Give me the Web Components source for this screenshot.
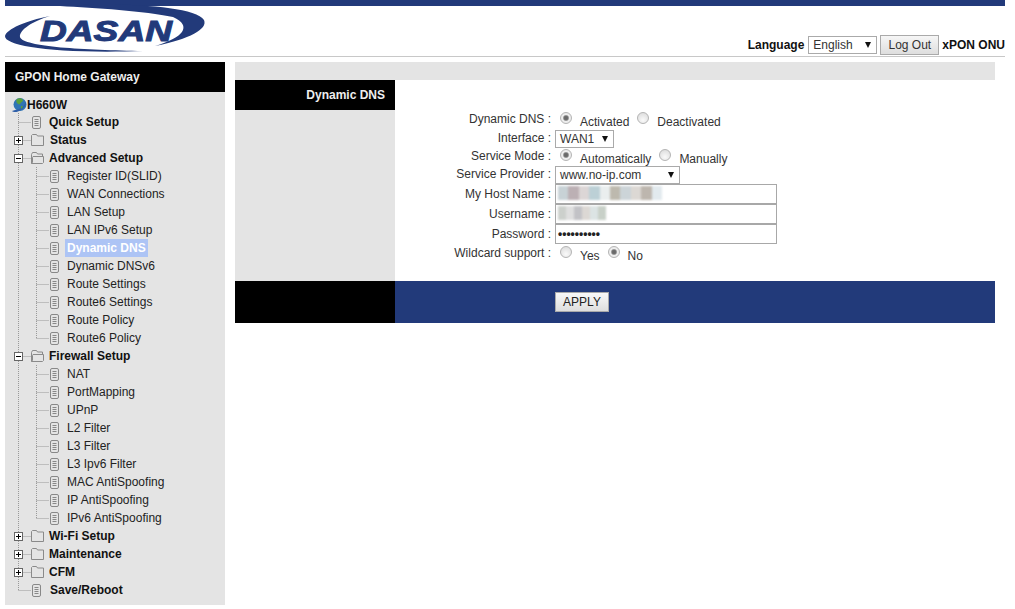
<!DOCTYPE html>
<html>
<head>
<meta charset="utf-8">
<title>GPON Home Gateway</title>
<style>
  html, body { margin: 0; padding: 0; background: #fff; }
  body { font-family: "Liberation Sans", Arial, sans-serif; font-size: 12px; color: #222; }
  .page { width: 1000px; margin-left: 5px; }
</style>
</head>
<body>
<div class="page">
  <top-header></top-header>
  <div style="display:flex; gap:10px; margin-top:5px;">
    <side-tree></side-tree>
    <dns-panel></dns-panel>
  </div>
</div>

<script>
/**
 * @name TopHeader
 * @description blue strip, logo and the language / log out row
 */
class TopHeader extends HTMLElement {
  constructor() {
    super();
    this.attachShadow({ mode: 'open' });
    this.shadowRoot.innerHTML = `
      <style>
        :host { display: block; font-family: "Liberation Sans", Arial, sans-serif; }
        .strip { height: 6px; background: #223a7a; }
        .row { height: 50px; display: flex; justify-content: space-between; align-items: flex-end; border-bottom: 1px solid #c8c8c8; }
        svg { display: block; margin-bottom: 1px; overflow: visible; }
        .tools { display: flex; align-items: center; gap: 3px; font-size: 12px; font-weight: bold; color: #111; margin-bottom: 1px; }
        .tools b:first-child { margin-right: 1px; }
        .sel { width: 69px; height: 18px; box-sizing: border-box; border: 1px solid #aaa; background: #fff; font-weight: normal; color: #333; padding-left: 4px; display: flex; justify-content: space-between; align-items: center; }
        .sel i { width: 0; height: 0; border: 3.5px solid transparent; border-top: 6px solid #111; border-bottom: 0; margin-right: 5px; }
        .btn { width: 59px; height: 20px; box-sizing: border-box; border: 1px solid #aaa; background: linear-gradient(#f6f6f6, #dedede); font-weight: normal; color: #333; display: flex; justify-content: center; align-items: center; }
      </style>
      <div class="strip"></div>
      <div class="row">
        <svg width="205" height="50" viewBox="0 0 205 50">
          <path d="M45 11C20 16 2 24 0 31C-1 41 50 49 138 46C80 45 18 42 15 32C14 25 28 16 45 11Z" fill="#223a7a"/>
          <path d="M55 1C110 -3 190 0 199 15C203 24 185 34 150 41C178 33 188 21 168 12C140 6 90 3 55 1Z" fill="#223a7a"/>
          <text x="35" y="36" textLength="132" lengthAdjust="spacingAndGlyphs" font-family="Liberation Sans" font-weight="bold" font-style="italic" font-size="30" fill="#223a7a" stroke="#223a7a" stroke-width="1">DASAN</text>
        </svg>
        <div class="tools">
          <b>Language</b>
          <div class="sel"><span>English</span><i></i></div>
          <div class="btn">Log Out</div>
          <b>xPON ONU</b>
        </div>
      </div>
    `;
  }
}
customElements.define('top-header', TopHeader);

const icons = {
  doc: `<rect x=".5" y="1.5" width="8" height="12" rx="1.5" fill="none" stroke="#888"/><path d="M2.5 4.5h4M2.5 6.5h4M2.5 8.5h4M2.5 10.5h4" stroke="#888"/>`,
  folder: `<path d="M.5 12.5V2.5l1-1h4l1 1.5h6v9.5z" fill="none" stroke="#8a8a8a"/>`,
  open: `<path d="M.5 12.5V3.5l1-2h4l1 1.5h5v2M.5 12.5l1-1V6.5l.5-1h10.5v6l-1 1z" fill="none" stroke="#8a8a8a"/>`
};

/**
 * @name TreeRow
 * @description one 18px line of the menu tree
 * @param {string} kind - doc, folder, open
 * @param {string} toggle - plus, minus (optional)
 * @param {string} level - 0 top level, 1 child
 * @param {string} last - "yes" ends the vertical guide here
 * @param {string} nudge - extra text offset in px
 * @param {string} selected - highlighted row
 */
class TreeRow extends HTMLElement {
  connectedCallback() {
    const kind = this.getAttribute('kind') || 'doc';
    const toggle = this.getAttribute('toggle');
    const level = +(this.getAttribute('level') || 0);
    const last = this.getAttribute('last') === 'yes';
    const childLast = this.getAttribute('childlast') === 'yes';
    const nudge = +(this.getAttribute('nudge') || 0);
    const lines = [];
    // guides, drawn in row coordinates
    const dotted = 'stroke="#999" stroke-dasharray="1 1"';
    lines.push(`<path d="M13.5 0V${last ? 9 : 18}" ${dotted}/>`);
    if (level === 0) {
      lines.push(`<path d="M13.5 9.5H26" ${dotted}/>`);
    } else {
      lines.push(`<path d="M31.5 0V${childLast ? 9 : 18}M31.5 9.5H44" ${dotted}/>`);
    }
    if (toggle) {
      lines.push(`<rect x="9.5" y="5.5" width="8" height="8" fill="#fff" stroke="#666"/><path d="M11 9.5h5${toggle === 'plus' ? 'M13.5 7v5' : ''}" stroke="#000"/>`);
    }
    const iconX = level === 0 ? (kind === 'doc' ? 27 : 26) : 45;
    lines.push(`<g transform="translate(${iconX} 2)">${icons[kind]}</g>`);
    const pad = (level === 0 ? 44 : 62) + nudge;
    this.attachShadow({ mode: 'open' });
    this.shadowRoot.innerHTML = `
      <style>
        :host { display: block; height: 18px; position: relative; }
        svg { position: absolute; left: 0; top: 0; }
        .t { display: block; line-height: 18px; padding-left: ${pad}px; font-size: 12px; white-space: nowrap; color: #222; position: relative; }
        :host([level="0"]) .t { font-weight: bold; color: #111; }
        :host([selected]) .t span { background: #adc4f5; color: #fff; font-weight: bold; padding: 2px; margin-left: -2px; }
      </style>
      <svg width="64" height="18">${lines.join('')}</svg>
      <span class="t"><span><slot></slot></span></span>
    `;
  }
}
customElements.define('tree-row', TreeRow);

/**
 * @name SideTree
 * @description left menu with black title and gray tree
 */
class SideTree extends HTMLElement {
  constructor() {
    super();
    const adv = ['Register ID(SLID)', 'WAN Connections', 'LAN Setup', 'LAN IPv6 Setup', 'Dynamic DNS', 'Dynamic DNSv6', 'Route Settings', 'Route6 Settings', 'Route Policy', 'Route6 Policy'];
    const fw = ['NAT', 'PortMapping', 'UPnP', 'L2 Filter', 'L3 Filter', 'L3 Ipv6 Filter', 'MAC AntiSpoofing', 'IP AntiSpoofing', 'IPv6 AntiSpoofing'];
    const child = (list) => list.map((name, i) =>
      `<tree-row kind="doc" level="1"${i === list.length - 1 ? ' childlast="yes"' : ''}${name === 'Dynamic DNS' ? ' selected' : ''}>${name}</tree-row>`).join('');
    this.attachShadow({ mode: 'open' });
    this.shadowRoot.innerHTML = `
      <style>
        :host { display: block; width: 220px; flex: none; font-family: "Liberation Sans", Arial, sans-serif; }
        .title { height: 30px; line-height: 30px; background: #000; color: #eee; font-size: 12px; font-weight: bold; padding-left: 10px; }
        .tree { background: #e4e4e4; height: 513px; padding-top: 5px; box-sizing: border-box; }
        .root { height: 16px; line-height: 16px; display: flex; align-items: center; font-weight: bold; font-size: 12px; color: #111; padding-left: 7px; }
      </style>
      <div class="title">GPON Home Gateway</div>
      <div class="tree">
        <div class="root">
          <svg width="15" height="16" viewBox="0 0 15 16">
            <circle cx="8" cy="7.5" r="6.5" fill="#2f74b5"/>
            <path d="M0 14c2 2 6 1 9-1 3-2 5-5 5-8-2 4-4 6-7 7-3 1-5 1-7 2z" fill="#2f5fa8"/>
            <path d="M5 2c2-1 5-1 6 1 0 2-2 2-3 4-1 1-2 0-3-1-1-1-1-3 0-4z" fill="#5aa03c"/>
            <path d="M9 9c1 0 2 0 2 1l-2 2z" fill="#5aa03c"/>
          </svg>H660W
        </div>
        <tree-row kind="doc" level="0">Quick Setup</tree-row>
        <tree-row kind="folder" toggle="plus" level="0" nudge="1">Status</tree-row>
        <tree-row kind="open" toggle="minus" level="0">Advanced Setup</tree-row>
        ${child(adv)}
        <tree-row kind="open" toggle="minus" level="0">Firewall Setup</tree-row>
        ${child(fw)}
        <tree-row kind="folder" toggle="plus" level="0">Wi-Fi Setup</tree-row>
        <tree-row kind="folder" toggle="plus" level="0">Maintenance</tree-row>
        <tree-row kind="folder" toggle="plus" level="0">CFM</tree-row>
        <tree-row kind="doc" level="0" last="yes" nudge="1">Save/Reboot</tree-row>
      </div>
    `;
  }
}
customElements.define('side-tree', SideTree);

/**
 * @name RadioDot
 * @description old chrome looking radio button
 */
class RadioDot extends HTMLElement {
  constructor() {
    super();
    this.attachShadow({ mode: 'open' });
    this.shadowRoot.innerHTML = `
      <style>
        :host { display: inline-block; width: 12px; height: 12px; box-sizing: border-box; border-radius: 50%; border: 1px solid #b4b4b4; background: radial-gradient(circle at 50% 70%, #fafafa, #d8d8d8); position: relative; top: -2px; }
        :host([on]) { background: radial-gradient(circle, #666 0, #707070 2px, #eee 3.5px, #e8e8e8); }
      </style>
    `;
  }
}
customElements.define('radio-dot', RadioDot);

/**
 * @name FormRow
 * @description label on the right edge of a 160px column, control after it
 * @param {string} label
 * @param {string} height - row height in px
 * @param {string} flat - label sits on the row centre, for rows with an input box
 */
class FormRow extends HTMLElement {
  connectedCallback() {
    const label = this.getAttribute('label');
    this.attachShadow({ mode: 'open' });
    this.shadowRoot.innerHTML = `
      <style>
        :host { display: flex; height: ${this.getAttribute('height') || 18}px; align-items: center; font-size: 12px; color: #333; }
        .l { width: 160px; text-align: right; padding-right: 4px; box-sizing: border-box; white-space: nowrap; flex: none; position: relative; top: -1px; }
        :host([flat]) .l { top: 0; }
        .c { display: flex; align-items: center; }
      </style>
      <div class="l">${label} :</div>
      <div class="c"><slot></slot></div>
    `;
  }
}
customElements.define('form-row', FormRow);

/**
 * @name DnsPanel
 * @description Dynamic DNS settings table
 */
class DnsPanel extends HTMLElement {
  constructor() {
    super();
    this.attachShadow({ mode: 'open' });
    this.shadowRoot.innerHTML = `
      <style>
        :host { display: block; width: 760px; flex: none; font-family: "Liberation Sans", Arial, sans-serif; font-size: 12px; color: #333; }
        .gray { height: 18px; background: #e4e4e4; }
        .body { display: grid; grid-template-columns: 160px 600px; height: 201px; }
        .left { background: #e4e4e4; }
        .left div { height: 30px; line-height: 30px; background: #000; color: #eee; font-weight: bold; text-align: right; padding-right: 10px; }
        .form { padding: 30px 0 0 0; }
        .foot { display: grid; grid-template-columns: 160px 600px; height: 42px; }
        .foot .a { background: #000; }
        .foot .b { background: #223a7a; display: flex; align-items: center; padding-left: 160px; }
        .apply { width: 54px; height: 20px; box-sizing: border-box; border: 1px solid #aaa; background: linear-gradient(#f8f8f8, #dedede); color: #222; display: flex; align-items: center; justify-content: center; }
        .lab { margin-left: 8px; margin-right: 8px; position: relative; top: 2px; }
        .sel { height: 18px; box-sizing: border-box; border: 1px solid #aaa; background: #fff; padding-left: 4px; display: flex; align-items: center; justify-content: space-between; }
        .sel i { width: 0; height: 0; border: 3.5px solid transparent; border-top: 6px solid #111; border-bottom: 0; margin-right: 5px; }
        .inp { width: 222px; height: 20px; box-sizing: border-box; border: 1px solid #a8a8a8; background: #fff; display: flex; align-items: center; padding-left: 2px; overflow: hidden; }
        .blur { display: flex; height: 14px; margin-top: -3px; filter: blur(.8px); }
        .blur span { display: block; width: 10.4px; height: 14px; }
        .dots { font-size: 12px; color: #222; font-weight: bold; }
        .radio { margin-left: 5px; }
      </style>
      <div class="gray"></div>
      <div class="body">
        <div class="left"><div>Dynamic DNS</div></div>
        <div class="form">
          <form-row label="Dynamic DNS" height="20">
            <radio-dot class="radio" on></radio-dot><span class="lab">Activated</span><radio-dot></radio-dot><span class="lab">Deactivated</span>
          </form-row>
          <form-row label="Interface" height="18">
            <div class="sel" style="width:59px"><span>WAN1</span><i></i></div>
          </form-row>
          <form-row label="Service Mode" height="18">
            <radio-dot class="radio" on></radio-dot><span class="lab">Automatically</span><radio-dot></radio-dot><span class="lab">Manually</span>
          </form-row>
          <form-row label="Service Provider" height="18">
            <div class="sel" style="width:125px"><span>www.no-ip.com</span><i></i></div>
          </form-row>
          <form-row label="My Host Name" height="20" flat>
            <div class="inp"><div class="blur">
              <span style="background:#c8d2d6"></span><span style="background:#bcb0b4"></span><span style="background:#dcd6d6"></span><span style="background:#bcd0d6"></span><span style="background:#eaeeee"></span><span style="background:#bdb9ae"></span><span style="background:#ccd4d8"></span><span style="background:#dcd8d4"></span><span style="background:#bdb6ae"></span><span style="background:#e2eaee"></span>
            </div></div>
          </form-row>
          <form-row label="Username" height="20" flat>
            <div class="inp"><div class="blur">
              <span style="background:#ccd0cc;width:8px"></span><span style="background:#dfdfdf;width:8px"></span><span style="background:#c2c2c6;width:8px"></span><span style="background:#dcd8d4;width:8px"></span><span style="background:#dce4e4;width:8px"></span><span style="background:#c8d0c8;width:8px"></span>
            </div></div>
          </form-row>
          <form-row label="Password" height="20" flat>
            <div class="inp"><span class="dots">••••••••••</span></div>
          </form-row>
          <form-row label="Wildcard support" height="19">
            <radio-dot class="radio"></radio-dot><span class="lab">Yes</span><radio-dot on></radio-dot><span class="lab">No</span>
          </form-row>
        </div>
      </div>
      <div class="foot">
        <div class="a"></div>
        <div class="b"><div class="apply">APPLY</div></div>
      </div>
    `;
  }
}
customElements.define('dns-panel', DnsPanel);
</script>
</body>
</html>
